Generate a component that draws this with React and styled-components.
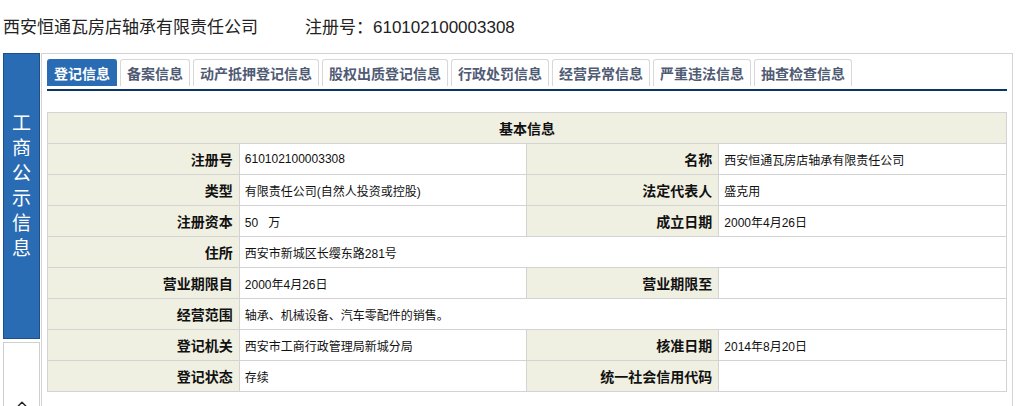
import styled, { createGlobalStyle } from 'styled-components';
import { ChevronUp } from 'lucide-react';

const GlobalStyle = createGlobalStyle`
    body {
        margin: 0;
        background: #ffffff;
        font-family: 'Liberation Sans', 'Noto Sans CJK SC', sans-serif;
        color: #111;
    }
`;

const Page = styled.div`
    padding: 0 4px 0 3px;
    height: 406px;
    overflow: hidden;
`;

const TitleBar = styled.div`
    display: flex;
    align-items: center;
    box-sizing: border-box;
    height: 53px;
    padding-top: 8px;
    padding-bottom: 6px;
    font-size: 17px;
    line-height: 22px;
    color: #222;

    span + span {
        margin-left: 47px;
    }
`;

const Body = styled.div`
    display: flex;
    gap: 1px;
    height: 420px;
`;

const Side = styled.div`
    display: flex;
    flex-direction: column;
    gap: 3px;
    width: 37px;
    flex-shrink: 0;
`;

const SideTitle = styled.div`
    box-sizing: border-box;
    flex-shrink: 0;
    height: 286px;
    padding-top: 55px;
    background: #2a6cb4;
    border: 1px solid #1d4f8a;
    color: #ffffff;
    font-family: 'Noto Sans CJK SC', sans-serif;
    font-size: 19px;
    line-height: 25px;

    p {
        width: 20px;
        margin: 0 auto;
        text-align: center;
    }
`;

const SideBottom = styled.div`
    flex: 1;
    display: flex;
    justify-content: center;
    align-items: flex-start;
    padding-top: 54px;
    border: 1px solid #cfcfcf;
    color: #222;
`;

const Panel = styled.div`
    flex: 1;
    border: 1px solid #d3d3d3;
    border-bottom: none;
    padding: 5px 5px 0 5px;
`;

const TabBar = styled.div`
    display: flex;
    gap: 3px;
    padding-bottom: 3px;
    border-bottom: 2px solid #0c3567;
`;

const Tab = styled.div`
    box-sizing: border-box;
    height: 27px;
    padding: 0 6px;
    border: 1px solid ${(p) => (p.$active ? '#2a6cb4' : '#d8d8d8')};
    border-bottom: none;
    border-radius: 3px 3px 0 0;
    background: ${(p) => (p.$active ? '#2a6cb4' : '#ffffff')};
    color: ${(p) => (p.$active ? '#ffffff' : '#4f5b73')};
    font-family: 'Noto Sans CJK SC', sans-serif;
    font-size: 14px;
    font-weight: 700;
    line-height: 26px;
    white-space: nowrap;
`;

const Table = styled.table`
    width: 100%;
    margin-top: 21px;
    border-collapse: collapse;
    table-layout: fixed;
    border: 1px solid #d3d3d3;
`;

const Head = styled.th`
    height: 30px;
    padding: 0;
    background: #f0f0e2;
    border: 1px solid #d3d3d3;
    font-family: 'Noto Sans CJK SC', sans-serif;
    font-size: 14px;
    font-weight: 700;
    text-align: center;
`;

const Label = styled.td`
    height: 30px;
    padding: 0 6px 0 0;
    background: #f0f0e2;
    border: 1px solid #d3d3d3;
    font-family: 'Noto Sans CJK SC', sans-serif;
    font-size: 14px;
    font-weight: 700;
    text-align: right;
    white-space: nowrap;
`;

const Value = styled.td`
    height: 30px;
    padding: 0 0 0 5px;
    background: #ffffff;
    border: 1px solid #d3d3d3;
    font-size: 12px;
    white-space: nowrap;
`;

const tabs = [
    '登记信息',
    '备案信息',
    '动产抵押登记信息',
    '股权出质登记信息',
    '行政处罚信息',
    '经营异常信息',
    '严重违法信息',
    '抽查检查信息',
];

const rows = [
    ['注册号', '610102100003308', '名称', '西安恒通瓦房店轴承有限责任公司'],
    ['类型', '有限责任公司(自然人投资或控股)', '法定代表人', '盛克用'],
    ['注册资本', '50\u00a0\u00a0\u00a0万', '成立日期', '2000年4月26日'],
    ['住所', '西安市新城区长缨东路281号'],
    ['营业期限自', '2000年4月26日', '营业期限至', ''],
    ['经营范围', '轴承、机械设备、汽车零配件的销售。'],
    ['登记机关', '西安市工商行政管理局新城分局', '核准日期', '2014年8月20日'],
    ['登记状态', '存续', '统一社会信用代码', ''],
];

const App = () => {
    return (
        <Page>
            <GlobalStyle />
            <TitleBar>
                <span>西安恒通瓦房店轴承有限责任公司</span>
                <span>注册号：610102100003308</span>
            </TitleBar>
            <Body>
                <Side>
                    <SideTitle>
                        <p>工商公示信息</p>
                    </SideTitle>
                    <SideBottom>
                        <ChevronUp size={14} strokeWidth={2.5} />
                    </SideBottom>
                </Side>
                <Panel>
                    <TabBar>
                        {tabs.map((t, i) => (
                            <Tab key={t} $active={i === 0}>
                                {t}
                            </Tab>
                        ))}
                    </TabBar>
                    <Table>
                        <colgroup>
                            <col style={{ width: '20%' }} />
                            <col style={{ width: '30%' }} />
                            <col style={{ width: '20%' }} />
                            <col style={{ width: '30%' }} />
                        </colgroup>
                        <tbody>
                            <tr>
                                <Head colSpan={4}>基本信息</Head>
                            </tr>
                            {rows.map((r) => (
                                <tr key={r[0]}>
                                    <Label>{r[0]}</Label>
                                    {r.length === 2 ? (
                                        <Value colSpan={3}>{r[1]}</Value>
                                    ) : (
                                        <>
                                            <Value>{r[1]}</Value>
                                            <Label>{r[2]}</Label>
                                            <Value>{r[3]}</Value>
                                        </>
                                    )}
                                </tr>
                            ))}
                        </tbody>
                    </Table>
                </Panel>
            </Body>
        </Page>
    );
};

export default App;
